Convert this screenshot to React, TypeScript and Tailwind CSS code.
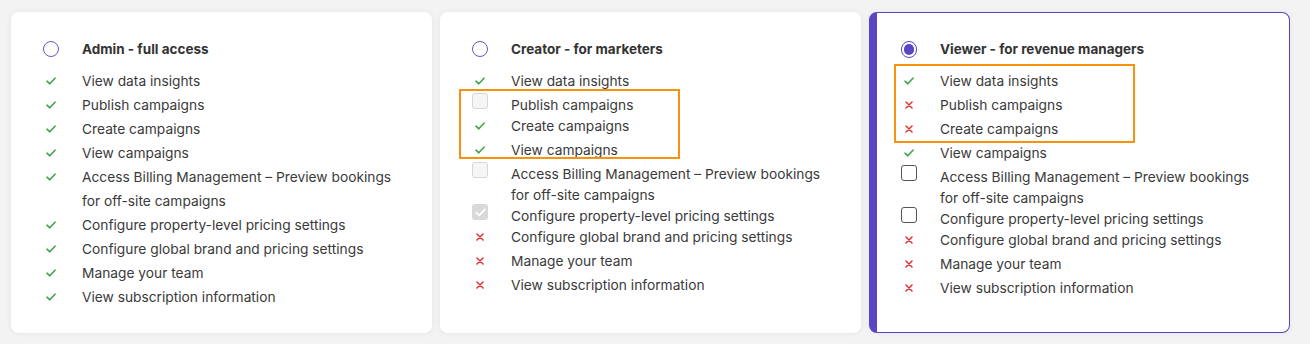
import React from "react";

type Kind = "check" | "x" | "box" | "boxDark" | "boxChecked";

const Check = () => (
  <svg width="10" height="8" viewBox="0 0 10 8" fill="none">
    <path d="M1 4.2 L3.8 6.8 L9 1.2" stroke="#3da64b" strokeWidth="1.6" strokeLinecap="round" strokeLinejoin="round" />
  </svg>
);

const Cross = () => (
  <svg width="8" height="8" viewBox="0 0 8 8" fill="none">
    <path d="M1 1 L7 7 M7 1 L1 7" stroke="#e23b3b" strokeWidth="1.6" strokeLinecap="round" />
  </svg>
);

function Icon({ kind }: { kind: Kind }) {
  if (kind === "check") return <Check />;
  if (kind === "x") return <Cross />;
  if (kind === "box")
    return <div className="w-4 h-4 rounded-[3px] border border-[#d6d6d6] bg-[#f6f6f6]" />;
  if (kind === "boxDark")
    return <div className="w-4 h-4 rounded-[3px] border border-[#555555] bg-white" />;
  return (
    <div className="w-4 h-4 rounded-[3px] bg-[#d9d9d9] flex items-center justify-center">
      <svg width="11" height="9" viewBox="0 0 11 9" fill="none">
        <path d="M1.2 4.6 L4.2 7.4 L9.8 1.4" stroke="#ffffff" strokeWidth="1.8" strokeLinecap="round" strokeLinejoin="round" />
      </svg>
    </div>
  );
}

function Row({ kind, children }: { kind: Kind; children: React.ReactNode }) {
  const isBox = kind === "box" || kind === "boxDark" || kind === "boxChecked";
  if (isBox) {
    return (
      <div className="flex items-start">
        <div className="w-4 mr-[23px] flex justify-center shrink-0">
          <Icon kind={kind} />
        </div>
        <div className="leading-[21px] w-[320px] pt-[2px] -mb-[2px]">{children}</div>
      </div>
    );
  }
  return (
    <div className="flex items-start">
      <div className="w-4 h-6 mr-[23px] flex items-center justify-center shrink-0">
        <Icon kind={kind} />
      </div>
      <div className="leading-6 w-[320px]">{children}</div>
    </div>
  );
}

const items = [
  "View data insights",
  "Publish campaigns",
  "Create campaigns",
  "View campaigns",
  "Access Billing Management \u2013 Preview bookings for off-site campaigns",
  "Configure property-level pricing settings",
  "Configure global brand and pricing settings",
  "Manage your team",
  "View subscription information",
];

function Card({
  title,
  kinds,
  selected,
}: {
  title: string;
  kinds: Kind[];
  selected?: boolean;
}) {
  return (
    <div
      className={
        selected
          ? "w-[421px] h-[321px] bg-white rounded-lg border border-[#5b45c5] border-l-8 pl-6 pt-6 shadow-[0_0_6px_rgba(0,0,0,0.06)]"
          : "w-[421px] h-[321px] bg-white rounded-lg border border-transparent pl-[31px] pt-6 shadow-[0_0_6px_rgba(0,0,0,0.06)]"
      }
    >
      <div className="flex items-center h-6 mb-2">
        <div className="w-4 mr-[23px] flex justify-center shrink-0">
          {selected ? (
            <div className="w-[17px] h-[17px] rounded-full border-[1.5px] border-[#5b45c5] p-[2px]">
              <div className="w-full h-full rounded-full bg-[#5b45c5]" />
            </div>
          ) : (
            <div className="w-4 h-4 rounded-full border-[1.5px] border-[#6a55cc]" />
          )}
        </div>
        <div className="font-bold text-[13.5px] text-[#333333]">{title}</div>
      </div>
      <div className="flex flex-col text-[13.75px] text-[#3a3a3a]">
        {items.map((t, i) => (
          <Row key={i} kind={kinds[i]}>
            {t}
          </Row>
        ))}
      </div>
    </div>
  );
}

export default function App() {
  return (
    <div
      className="relative w-[1310px] h-[344px] bg-[#f3f3f3] pt-3 pl-[11px] flex gap-2"
      style={{ fontFamily: "Inter, 'Noto Sans', sans-serif" }}
    >
      <Card
        title="Admin - full access"
        kinds={["check", "check", "check", "check", "check", "check", "check", "check", "check"]}
      />
      <Card
        title="Creator - for marketers"
        kinds={["check", "box", "check", "check", "box", "boxChecked", "x", "x", "x"]}
      />
      <Card
        title="Viewer - for revenue managers"
        selected
        kinds={["check", "x", "x", "check", "boxDark", "boxDark", "x", "x", "x"]}
      />
      <div className="absolute left-[459px] top-[89px] w-[221px] h-[70px] border-2 border-[#f5930f] pointer-events-none" />
      <div className="absolute left-[894px] top-[64px] w-[241px] h-[79px] border-2 border-[#f5930f] pointer-events-none" />
    </div>
  );
}
